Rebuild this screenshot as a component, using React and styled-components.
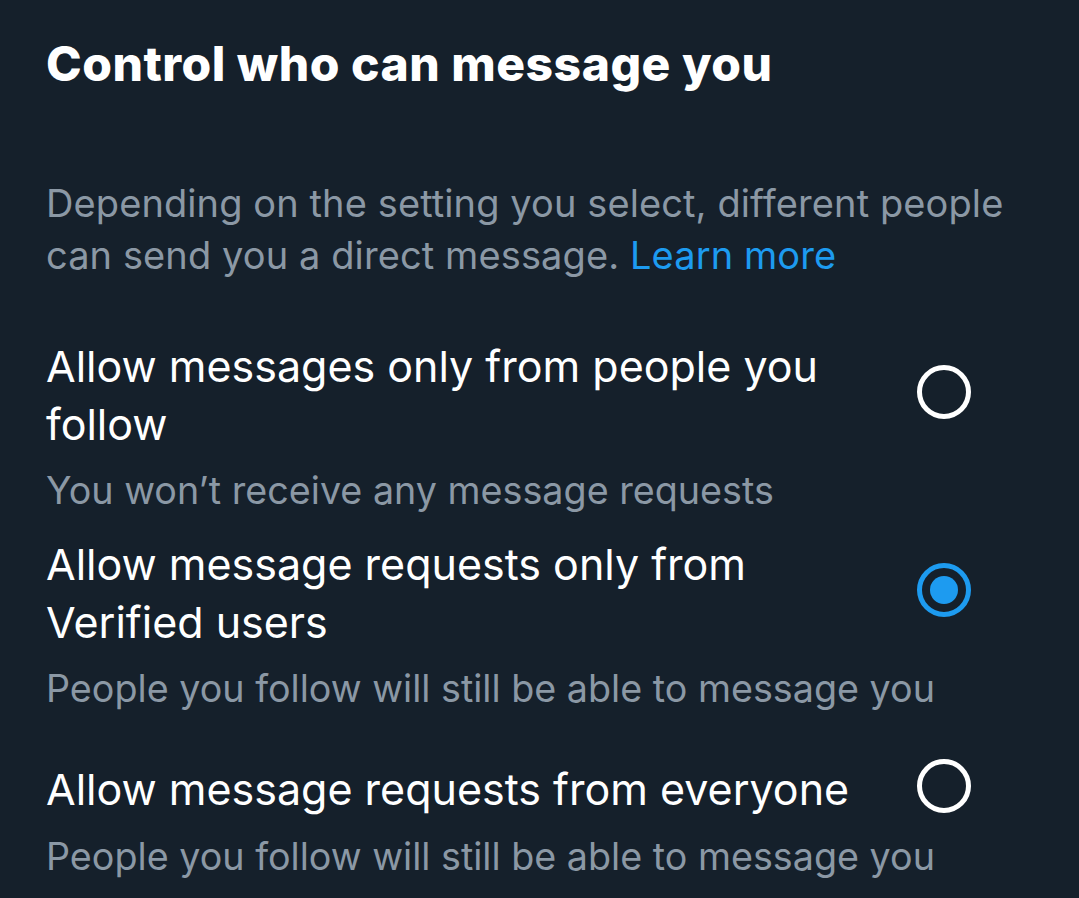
import React from "react";
import styled, { createGlobalStyle } from "styled-components";

const Global = createGlobalStyle`
  html, body { margin: 0; padding: 0; background: #15202b; }
  body { font-family: Inter, "Noto Sans", sans-serif; -webkit-font-smoothing: antialiased; }
`;

const Page = styled.div`
  background: #15202b;
  min-height: 898px;
  padding: 34px 46px 0 46px;
  box-sizing: border-box;
  color: #ffffff;
`;

const Title = styled.h1`
  margin: 0;
  font-size: 48px;
  line-height: 60px;
  font-weight: 800;
  letter-spacing: 0.5px;
`;

const Description = styled.p`
  margin: 83px 0 0 0;
  font-size: 38px;
  line-height: 52px;
  letter-spacing: 0.1px;
  color: #8b98a5;
  font-weight: 400;
`;

const Link = styled.a`
  color: #1d9bf0;
  text-decoration: none;
`;

const Options = styled.div`
  display: flex;
  flex-direction: column;
`;

const Option = styled.label`
  display: grid;
  grid-template-columns: 1fr 54px;
  column-gap: 30px;
  margin-top: ${(p) => p.$top}px;
  padding-right: 62px;
  cursor: pointer;
`;

const OptionTitle = styled.div`
  grid-column: 1;
  grid-row: 1;
  font-size: 43px;
  line-height: 58px;
  color: #ffffff;
  align-self: center;
`;

const OptionSub = styled.div`
  grid-column: 1 / span 2;
  grid-row: 2;
  margin-top: 12px;
  font-size: 37.7px;
  line-height: 50px;
  color: #8b98a5;
`;

const Radio = styled.span`
  grid-column: 2;
  grid-row: 1;
  align-self: center;
  margin-bottom: 6px;
  width: 54px;
  height: 54px;
  box-sizing: border-box;
  border-radius: 50%;
  border: 5px solid ${(p) => (p.$checked ? "#1d9bf0" : "#ffffff")};
  display: flex;
  align-items: center;
  justify-content: center;
`;

const Dot = styled.span`
  width: 28px;
  height: 28px;
  border-radius: 50%;
  background: #1d9bf0;
`;

const options = [
  {
    title: "Allow messages only from people you follow",
    sub: "You won\u2019t receive any message requests",
    checked: false,
    top: 56,
  },
  {
    title: "Allow message requests only from Verified users",
    sub: "People you follow will still be able to message you",
    checked: true,
    top: 20,
  },
  {
    title: "Allow message requests from everyone",
    sub: "People you follow will still be able to message you",
    checked: false,
    top: 46,
  },
];

export default function App() {
  return (
    <>
      <Global />
      <Page>
        <Title>Control who can message you</Title>
        <Description>
          Depending on the setting you select, different people can send you a
          direct message. <Link href="#">Learn more</Link>
        </Description>
        <Options>
          {options.map((o) => (
            <Option key={o.title} $top={o.top}>
              <OptionTitle>{o.title}</OptionTitle>
              <Radio $checked={o.checked}>{o.checked && <Dot />}</Radio>
              <OptionSub>{o.sub}</OptionSub>
            </Option>
          ))}
        </Options>
      </Page>
    </>
  );
}
